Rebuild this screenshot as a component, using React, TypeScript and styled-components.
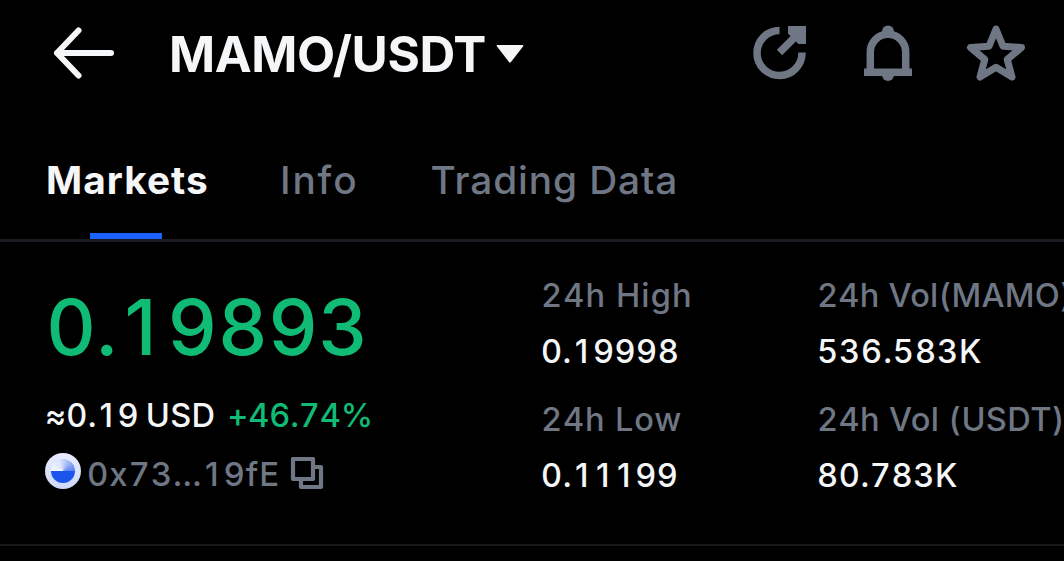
import React from 'react';
import styled, { createGlobalStyle } from 'styled-components';

const GlobalStyle = createGlobalStyle`
    * {
        box-sizing: border-box;
    }
    body {
        margin: 0;
        background: #000;
        overflow: hidden;
    }
`;

const Screen = styled.div`
    display: flex;
    flex-direction: column;
    width: 1064px;
    height: 561px;
    overflow: hidden;
    background: #000;
    color: #f5f6f8;
    font-family: Inter, 'Liberation Sans', sans-serif;
    font-variant-numeric: tabular-nums;
    white-space: nowrap;
`;

const Header = styled.header`
    display: flex;
    align-items: center;
    height: 108px;
    padding: 0 38px 0 52px;
`;

const IconButton = styled.button`
    display: flex;
    padding: 0;
    border: 0;
    background: none;
    color: inherit;
`;

const PairButton = styled.button`
    display: flex;
    align-items: center;
    gap: 10px;
    margin-left: 53px;
    padding: 0;
    border: 0;
    background: none;
    color: inherit;
    font-family: inherit;
`;

const PairName = styled.span`
    font-size: 49.5px;
    line-height: 60px;
    font-weight: 660;
    letter-spacing: -0.4px;
`;

const Actions = styled.div`
    display: flex;
    align-items: center;
    gap: 48px;
    margin: 0 0 2px auto;
    color: #6f7684;
`;

const Tabs = styled.nav`
    display: flex;
    height: 134px;
    padding-left: 46px;
    border-bottom: 3px solid #1b1c21;
`;

const Tab = styled.button<{ $active?: boolean; $spacing: number; $gap?: number }>`
    display: flex;
    flex-direction: column;
    align-items: center;
    justify-content: space-between;
    margin: 0 ${(p) => p.$gap ?? 0}px 0 0;
    padding: 49px 0 0;
    border: 0;
    background: none;
    color: ${(p) => (p.$active ? '#f5f6f8' : '#6f7684')};
    font-family: inherit;
    font-size: 38.8px;
    line-height: 46px;
    font-weight: ${(p) => (p.$active ? 700 : 450)};
    letter-spacing: ${(p) => p.$spacing}px;
`;

const TabLine = styled.span`
    width: 72px;
    height: 6px;
    margin-right: 2px;
    background: #1a62fb;
`;

const Ticker = styled.section`
    display: grid;
    grid-template-columns: 495px 276px 1fr;
    height: 304px;
    padding-left: 46px;
    border-bottom: 2px solid #17181c;
`;

const PriceColumn = styled.div`
    padding-top: 38px;
`;

const Price = styled.div`
    color: #10bb76;
    font-size: 77.4px;
    line-height: 94px;
    font-weight: 450;
    letter-spacing: 0.2px;
`;

const FiatRow = styled.div`
    display: flex;
    margin: 21px 0 0 -1px;
    font-size: 32.6px;
    line-height: 40px;
    font-weight: 450;
`;

const Fiat = styled.span`
    letter-spacing: 0.2px;
    word-spacing: -2px;
`;

const Change = styled.span`
    margin-left: 12px;
    color: #10bb76;
    letter-spacing: -0.1px;
`;

const ContractRow = styled.div`
    display: flex;
    align-items: center;
    height: 40px;
    margin: 19px 0 0 -1px;
    color: #6f7684;
    font-size: 33px;
    line-height: 40px;
    font-weight: 450;
`;

const Coin = styled.span`
    display: flex;
    align-items: center;
    justify-content: center;
    width: 36px;
    height: 36px;
    margin-top: -6px;
    border-radius: 50%;
    background: linear-gradient(180deg, #e9ecfd, #d0d9fc);
`;

const CoinCore = styled.span`
    width: 24px;
    height: 24px;
    border-radius: 50%;
    background: conic-gradient(from 270deg, #f4f6fe, #dbe3fc 20%, #5c83ee 50%, #1a55ee 50%);
`;

const Address = styled.span`
    margin: 0 10px 0 6px;
    letter-spacing: 0.88px;
`;

const Stats = styled.dl`
    margin: 0;
    padding-top: 33px;
`;

const Label = styled.dt<{ $spacing: number }>`
    color: #6f7684;
    font-size: 32.6px;
    line-height: 40px;
    font-weight: 450;
    letter-spacing: ${(p) => p.$spacing}px;
`;

const Value = styled.dd<{ $spacing: number }>`
    margin: 16px 0 28px;
    font-size: 32.6px;
    line-height: 40px;
    font-weight: 500;
    letter-spacing: ${(p) => p.$spacing}px;
`;

// Inter's tabular "1" has a foot, so use the plain one in a digit-wide cell
const One = styled.span`
    display: inline-block;
    width: 0.645em;
    padding-right: 0.04em;
    text-align: center;
    font-variant-numeric: proportional-nums;
`;

const Digits = ({ text }: { text: string }) => (
    <>
        {text.split('').map((char, i) => (char === '1' ? <One key={i}>1</One> : char))}
    </>
);

const BackIcon = () => (
    <svg width="64" height="56" viewBox="0 0 64 56" fill="none" stroke="currentColor" strokeWidth="6" strokeLinecap="round" strokeLinejoin="round">
        <path d="M59 27H5M26.500 4.500 5 27l21.500 22.500" />
    </svg>
);

const CaretIcon = () => (
    <svg width="28" height="20" viewBox="0 0 28 20" fill="currentColor">
        <path d="M1.500 1h25Q28 1 27 2.500L15 18q-1 1.200-2 0L1 2.500Q0 1 1.500 1Z" />
    </svg>
);

const ShareIcon = () => (
    <svg width="60" height="60" viewBox="0 0 60 60" fill="none" stroke="currentColor" strokeWidth="7.500">
        <path d="M29.500 7.500a22.500 22.500 0 1 0 22.500 22" />
        <path d="M29.500 29.500 49 10" />
        <path d="M38 3h18v18h-7.500L38 10.500Z" fill="currentColor" stroke="none" />
    </svg>
);

const BellIcon = () => (
    <svg width="60" height="60" viewBox="0 0 60 60" fill="currentColor">
        <circle cx="30" cy="8.500" r="6" />
        <circle cx="30" cy="52" r="6" />
        <path d="M6 45.500h48V53H6Z" />
        <path d="M12.300 49V29a17.700 17.700 0 0 1 35.400 0V49" fill="none" stroke="currentColor" strokeWidth="7.500" />
    </svg>
);

const StarIcon = () => (
    <svg width="60" height="60" viewBox="0 0 60 60" fill="none" stroke="currentColor" strokeWidth="7" strokeLinejoin="round">
        <path d="m30 6 7 17.200 18.500 1.300-14.300 12 4.800 17.500-16-9.700L14 54l4.800-17.500L4.500 24.500 23 23.200Z" />
    </svg>
);

const CopyIcon = () => (
    <svg width="34" height="34" viewBox="0 0 34 34" fill="none" stroke="currentColor" strokeWidth="4.200" strokeLinejoin="round">
        <path d="M3 2h20v20H3Z" />
        <path d="M24 10h7v20H11v-7" />
    </svg>
);

export default function App() {
    return (
        <Screen>
            <GlobalStyle />
            <Header>
                <IconButton aria-label="Back">
                    <BackIcon />
                </IconButton>
                <PairButton>
                    <PairName>MAMO/USDT</PairName>
                    <CaretIcon />
                </PairButton>
                <Actions>
                    <IconButton aria-label="Share">
                        <ShareIcon />
                    </IconButton>
                    <IconButton aria-label="Alerts">
                        <BellIcon />
                    </IconButton>
                    <IconButton aria-label="Favorite">
                        <StarIcon />
                    </IconButton>
                </Actions>
            </Header>
            <Tabs>
                <Tab $active $spacing={1.06} $gap={71}>
                    Markets
                    <TabLine />
                </Tab>
                <Tab $spacing={1.9} $gap={72}>
                    Info
                </Tab>
                <Tab $spacing={0.9}>Trading Data</Tab>
            </Tabs>
            <Ticker>
                <PriceColumn>
                    <Price>
                        <Digits text="0.19893" />
                    </Price>
                    <FiatRow>
                        <Fiat>
                            <Digits text="≈0.19 USD" />
                        </Fiat>
                        <Change>+46.74%</Change>
                    </FiatRow>
                    <ContractRow>
                        <Coin>
                            <CoinCore />
                        </Coin>
                        <Address>
                            <Digits text="0x73...19fE" />
                        </Address>
                        <CopyIcon />
                    </ContractRow>
                </PriceColumn>
                <Stats>
                    <Label $spacing={1.1}>24h High</Label>
                    <Value $spacing={0.5}>
                        <Digits text="0.19998" />
                    </Value>
                    <Label $spacing={0.85}>24h Low</Label>
                    <Value $spacing={0.6}>
                        <Digits text="0.11199" />
                    </Value>
                </Stats>
                <Stats>
                    <Label $spacing={0.25}>24h Vol(MAMO)</Label>
                    <Value $spacing={0.94}>536.583K</Value>
                    <Label $spacing={0.35}>24h Vol (USDT)</Label>
                    <Value $spacing={0.6}>80.783K</Value>
                </Stats>
            </Ticker>
        </Screen>
    );
}
